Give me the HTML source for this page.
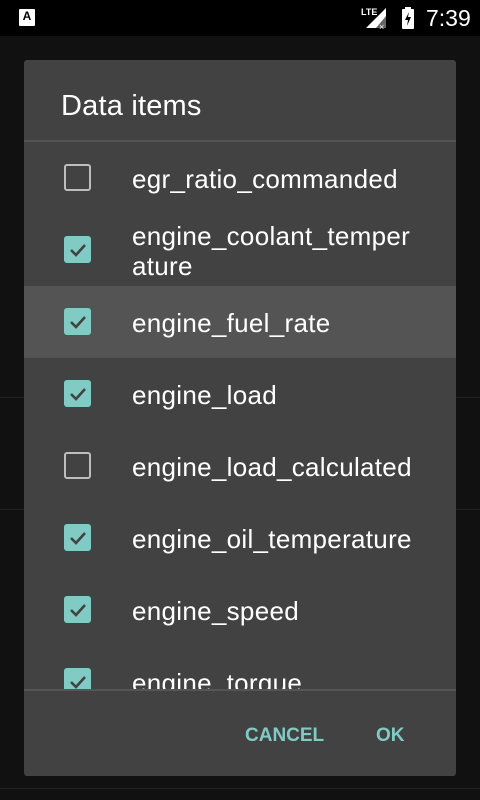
<!DOCTYPE html>
<html><head><style>
*{margin:0;padding:0;box-sizing:border-box}
body{width:480px;height:800px;background:#111;position:relative;overflow:hidden;font-family:"Liberation Sans",sans-serif}
.sb{position:absolute;left:0;top:0;width:480px;height:36px;background:#000}
.line{position:absolute;left:0;width:480px;height:1px;background:#222}
.dlg{position:absolute;left:24px;top:60px;width:432px;height:716px;background:#424242;border-radius:3px;overflow:hidden}
.title{position:absolute;left:37px;top:30px;font-size:29px;letter-spacing:0.2px;color:#fff}
.div{position:absolute;left:0;width:432px;height:2px;background:#555}
.list{position:absolute;left:0;top:82px;width:432px;height:548px;overflow:hidden}
.row{position:absolute;left:0;width:432px;height:72px}
.cb{position:absolute;left:40px;top:22px;width:27px;height:27px;border-radius:3px}
.on{background:#80cbc4}
.off{border:2.5px solid #bdbdbd}
.cb svg{position:absolute;left:3px;top:3px}
.t{position:absolute;left:108px;font-size:26px;letter-spacing:0.3px;color:#fff;line-height:30px}
.btn{position:absolute;top:665px;font-size:19px;font-weight:bold;color:#80cbc4}
</style></head><body>
<div class="sb">
<div style="position:absolute;left:19px;top:9px;width:16px;height:17px;background:#fff;border-radius:1px;font-size:12px;font-weight:bold;color:#000;text-align:center;line-height:15px">A</div>
<div style="position:absolute;left:361px;top:7px;font-size:9px;color:#fff;font-weight:bold">LTE</div>
<svg style="position:absolute;left:366px;top:8px" width="22" height="22"><polygon points="0,20 20,0 20,20" fill="#fff"/><polygon points="10,20 20,8 20,20" fill="#666"/><text x="13" y="22" font-size="9" fill="#fff" font-family="Liberation Sans">×</text></svg>
<svg style="position:absolute;left:402px;top:7px" width="12" height="22"><rect x="0" y="2" width="12" height="20" rx="1" fill="#fff"/><rect x="3" y="0" width="6" height="3" fill="#fff"/><path d="M7 5 L3 13 L6 13 L5 19 L9 10 L6 10 Z" fill="#000"/></svg>
<div style="position:absolute;left:426px;top:5px;font-size:23px;color:#fff">7:39</div>
</div>
<div class="line" style="top:397px"></div>
<div class="line" style="top:509px"></div>
<div class="line" style="top:788px"></div>
<div class="dlg">
<div class="title">Data items</div>
<div class="div" style="top:80px"></div>
<div class="list">
<div class="row" style="top:0"><div class="cb off"></div><div class="t" style="top:22px">egr_ratio_commanded</div></div>
<div class="row" style="top:72px"><div class="cb on"><svg width="21" height="21"><path d="M4 11 L9 16 L18 6" stroke="#424242" stroke-width="2.6" fill="none"/></svg></div><div class="t" style="top:7px">engine_coolant_temper<br>ature</div></div>
<div class="row" style="top:144px;background:#545454"><div class="cb on"><svg width="21" height="21"><path d="M4 11 L9 16 L18 6" stroke="#424242" stroke-width="2.6" fill="none"/></svg></div><div class="t" style="top:22px">engine_fuel_rate</div></div>
<div class="row" style="top:216px"><div class="cb on"><svg width="21" height="21"><path d="M4 11 L9 16 L18 6" stroke="#424242" stroke-width="2.6" fill="none"/></svg></div><div class="t" style="top:22px">engine_load</div></div>
<div class="row" style="top:288px"><div class="cb off"></div><div class="t" style="top:22px">engine_load_calculated</div></div>
<div class="row" style="top:360px"><div class="cb on"><svg width="21" height="21"><path d="M4 11 L9 16 L18 6" stroke="#424242" stroke-width="2.6" fill="none"/></svg></div><div class="t" style="top:22px">engine_oil_temperature</div></div>
<div class="row" style="top:432px"><div class="cb on"><svg width="21" height="21"><path d="M4 11 L9 16 L18 6" stroke="#424242" stroke-width="2.6" fill="none"/></svg></div><div class="t" style="top:22px">engine_speed</div></div>
<div class="row" style="top:504px"><div class="cb on"><svg width="21" height="21"><path d="M4 11 L9 16 L18 6" stroke="#424242" stroke-width="2.6" fill="none"/></svg></div><div class="t" style="top:22px">engine_torque</div></div>
</div>
<div class="div" style="top:629px"></div>
<div class="btn" style="left:221px">CANCEL</div>
<div class="btn" style="left:352px">OK</div>
</div>
</body></html>
